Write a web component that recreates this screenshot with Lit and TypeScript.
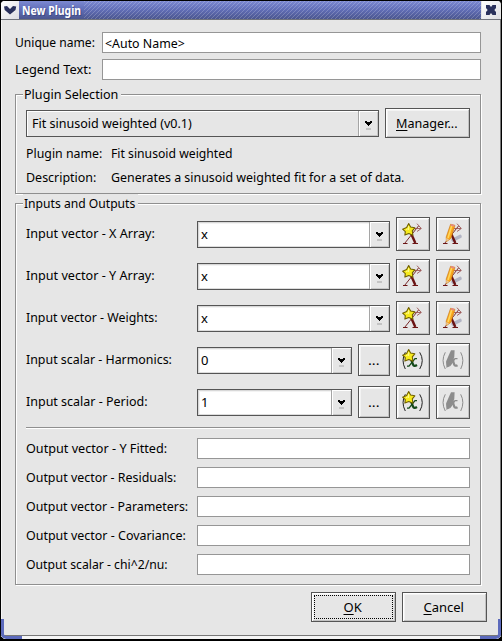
import { LitElement, html, svg, css, nothing } from "lit";
import { customElement, property } from "lit/decorators.js";

/** A line of text condensed horizontally to a given width. */
@customElement("ui-text")
class UiText extends LitElement {
  @property() text = "";
  @property({ type: Number }) w = 0;
  @property({ type: Number }) mnemonic = -1;
  static styles = css`
    :host { display: block; white-space: nowrap; flex: none; height: 18px; line-height: 18px; }
    span { display: inline-block; transform-origin: 0 50%; white-space: pre; }
    u { text-underline-offset: 2px; text-decoration-thickness: 1px; }
  `;
  updated() {
    const s = this.renderRoot.querySelector("span") as HTMLElement;
    this.style.width = this.w + "px";
    s.style.transform = `scaleX(${this.w / s.offsetWidth})`;
  }
  render() {
    const m = this.mnemonic;
    return html`<span>${m < 0 ? this.text : html`${this.text.slice(0, m)}<u>${this.text[m]}</u>${this.text.slice(m + 1)}`}</span>`;
  }
}

const star = svg`<path d="M12.7 6.6 L14.6 10 L18.8 10.8 L16.3 13.8 L16.9 18.2 L12.8 16.5 L8.9 18.1 L9.3 14.6 L6.6 12.2 L10.6 10.6 Z" fill="#f6ea1c" stroke="#716000" stroke-width="1.1" stroke-linejoin="round"/><path d="M12.6 9v4M10 12.5l3-1" stroke="#fffb8a" stroke-width="1"/>`;

const vectorX = svg`<g fill="none" stroke="#6b1414">
  <path d="M8.7 26.3L22.5 9" stroke-width=".9"/>
  <path d="M14 14L19.3 26" stroke-width="2.4"/>
  <path d="M7 26.5h4.5M16.5 26.5h5.5" stroke-width="1"/>
  <path d="M17 11.5H25M21 6.7L25.3 11.5L21 14.5" stroke="#9a5555" stroke-width=".9"/>
</g>`;

const icons: Record<string, unknown> = {
  newVector: svg`${vectorX}${star}`,
  editVector: svg`<path d="M17 23L24 19.5" stroke="#b2b4c4" stroke-width="3.6" stroke-linecap="round"/>${vectorX}
    <path d="M14.6 7.2L19 8.4L14.8 21.5L10.3 24.8L10.2 20Z" fill="#f9a51b" stroke="#c87510" stroke-width=".6"/>
    <path d="M15.8 8.5L12 21" stroke="#ffd75c" stroke-width="1.6"/><path d="M14.9 7.9L18.4 8.9" stroke="#e68a80" stroke-width="1.8"/>
    <path d="M10.3 21L10.3 24.6L13 22.4Z" fill="#e8c79a"/>`,
  newScalar: svg`<g fill="none" stroke="#222"><path d="M9.3 9.3Q4.8 17.5 9.3 26" stroke-width="1"/><path d="M23.7 9.3Q28.8 17.5 23.7 26" stroke-width="1"/></g>
    <g fill="none" stroke="#124818"><path d="M11 23.2L13 23.2L19 15.7L21 15.7" stroke-width="1.3"/><path d="M14.5 15L17 21.5Q18 24 21 22" stroke-width="2.2"/></g>${star}`,
  editScalar: svg`<g fill="none" stroke="#8c8c8c"><path d="M9.3 9.3Q4.8 17.5 9.3 26" stroke-width="1"/><path d="M24.7 9.3Q29 17.5 24.7 26" stroke-width="1"/>
    <path d="M12 23.3L14 22.5L19 15.7L21.5 15.7" stroke-width="1.3"/><path d="M16.5 15.5L18 21Q19 23.7 21.5 22.2" stroke-width="2.2"/></g>
    <path d="M15 7.2L18.6 7.2L18.3 14L15 21.5L10.5 25L10 18.5Z" fill="#8c8c8c"/>`,
};

@customElement("app-root")
class AppRoot extends LitElement {
  static styles = css`
    :host { display: block; width: 502px; height: 641px; font: 13px/18px "Noto Sans", "Open Sans", sans-serif; color: #000; background: #000; overflow: hidden; }
    * { box-sizing: border-box; }
    .window { position: relative; width: 502px; height: 641px; border: solid #000; border-width: 1px 1px 2px 1px; border-radius: 5px 5px 6px 6px; background: #e6e6e6; box-shadow: inset 1px 0 #f6f6f6, inset -1px 0 #777; display: flex; flex-direction: column; overflow: hidden; }
    .title { height: 19px; flex: none; display: flex; border-bottom: 1px solid #70737c; background: #e6e6e6; padding-right: 1px; }
    .tbtn { width: 18px; height: 18px; flex: none; background: linear-gradient(135deg, #fff, #dcdce2); }
    .tbtn.r { margin-left: 1px; }
    .tbtn svg, .face svg { display: block; }
    .bar { flex: 1; display: flex; padding-left: 3px; background: linear-gradient(#7c89d2, #626fb9 45%, #4b568f); color: #fff; font-weight: bold; font-size: 11.5px; text-shadow: 1px 1px #3f4a85; }
    .bar ui-text { margin-top: 1px; }
    .stripes { flex: 1; margin-left: 3px; background: repeating-linear-gradient(135deg, rgba(255,255,255,.2) 0 1px, transparent 1px 2.83px); }
    .body { flex: 1; display: flex; flex-direction: column; padding: 12px 0 0 14px; }
    .field { display: flex; width: 466px; height: 21px; margin-bottom: 6px; align-items: center; justify-content: space-between; }
    .field > ui-text, .outrow > ui-text, .lab > ui-text { margin-bottom: 2px; }
    .edit { height: 21px; background: #fff; border: 1px solid #969696; display: flex; align-items: center; padding-left: 2px; }
    .edit.top { width: 379px; }
    .edit.out { width: 273px; }
    .group { position: relative; width: 466px; border: 1px solid #8f8f8f; box-shadow: 1px 1px #fff, inset 1px 1px #fff; padding-left: 10px; padding-right: 9px; }
    .group.sel { height: 100px; margin-top: 8px; padding-top: 13px; }
    .group.io { height: 382px; margin-top: 9px; padding-top: 13px; }
    .legend { position: absolute; left: 7px; top: -10px; background: #e6e6e6; padding: 0 3px 0 1px; }
    .selrow { display: flex; justify-content: space-between; align-items: center; width: 444px; height: 30px; margin-bottom: 3px; }
    .info { display: flex; height: 24px; align-items: center; }
    .info .key { width: 85px; }
    .combo { height: 27px; border: 1px solid #555; background: #e6e6e6; display: flex; align-items: stretch; flex: none; }
    .combo .value { flex: 1; display: flex; align-items: center; padding-left: 5px; padding-bottom: 1px; box-shadow: inset 1px 1px #fff; }
    .combo.white .value { background: #fff; padding-left: 3px; padding-bottom: 0; box-shadow: inset 1px 1px #d8d8d8, inset 0 -1px #ddd, inset 2px 2px #f3f3f3; }
    .arrow { width: 20px; border-left: 1px solid #a5a5a5; box-shadow: inset 1px 1px #fff, inset -1px -1px #c6c6c6; }
    .arrow svg { display: block; }
    .w353 { width: 353px; } .w193 { width: 193px; } .w155 { width: 155px; }
    .btn { height: 30px; width: 85px; border: 1px solid #555; background: #e6e6e6; box-shadow: inset 1px 1px #fff, inset -1px -1px #c2c2c2, inset 2px 2px #f3f3f3; display: flex; align-items: center; justify-content: center; flex: none; }
    .btn > ui-text { margin-right: 2px; }
    .btn.dots { width: 32px; height: 32px; }
    .btn.face { width: 34px; height: 34px; }
    .btn.focus { outline: 1px dotted #000; outline-offset: -4px; }
    .row { display: flex; width: 444px; height: 34px; margin-bottom: 8px; align-items: center; gap: 6px; }
    .row .lab { flex: 1; }
    .rule { width: 444px; height: 2px; background: #8f8f8f; border-bottom: 1px solid #fff; margin-bottom: 9px; }
    .outrow { display: flex; width: 444px; height: 21px; margin-bottom: 8px; align-items: center; justify-content: space-between; }
    .footer { display: flex; gap: 6px; justify-content: flex-end; padding-right: 14px; margin-top: 7px; }
    .bottom { height: 4px; flex: none; border-top: 1px solid #777; background: #f5f5f5; }
    .corner { position: absolute; bottom: 0; width: 21px; height: 20px; border: 0 solid #5c6abc; border-bottom-width: 3px; }
    .corner.l { left: 0; border-left-width: 3px; border-bottom-left-radius: 5px; }
    .corner.r { right: 0; border-right-width: 3px; border-bottom-right-radius: 5px; }
  `;

  combo(text: string, w: number, cls: string) {
    return html`<div class="combo ${cls}">
      <div class="value"><ui-text text=${text} w=${w}></ui-text></div>
      <div class="arrow"><svg width="19" height="25" shape-rendering="crispEdges"><path d="M6 10h2v1h3v-1h2v2h-1v1h-1v1h-1v1h-1v-1h-1v-1h-1v-1h-1z"/><path d="M7 17h5v2h-5z" fill="#c4c4c4"/></svg></div>
    </div>`;
  }
  icon(name: string) {
    return html`<div class="btn face"><svg width="32" height="32" viewBox="1 1 32 32">${icons[name]}</svg></div>`;
  }
  row(label: string, w: number, value: string, scalar: boolean) {
    return html`<div class="row">
      <div class="lab"><ui-text text=${label} w=${w}></ui-text></div>
      ${this.combo(value, 7, scalar ? "white w155" : "white w193")}
      ${scalar ? html`<div class="btn dots"><ui-text text="..." w="11"></ui-text></div>` : nothing}
      ${this.icon(scalar ? "newScalar" : "newVector")}${this.icon(scalar ? "editScalar" : "editVector")}
    </div>`;
  }
  out(label: string, w: number) {
    return html`<div class="outrow"><ui-text text=${label} w=${w}></ui-text><div class="edit out"></div></div>`;
  }

  render() {
    return html`<div class="window">
      <div class="title">
        <div class="tbtn"><svg width="18" height="18"><path d="M3 5.5L6 5L9 8L12 5L15.2 5.5L14.5 9L9 13.5L3.7 9Z" fill="#29305c"/></svg></div>
        <div class="bar"><ui-text text="New Plugin" w="59"></ui-text><div class="stripes"></div></div>
        <div class="tbtn r"><svg width="18" height="18"><path d="M4 4h3.5L9 6l1.5-2H14v3l-1.7 2L14 11v3h-3.5L9 12l-1.5 2H4v-3l1.7-2L4 7z" fill="#29305c"/></svg></div>
      </div>
      <div class="body">
        <div class="field"><ui-text text="Unique name:" w="80"></ui-text><div class="edit top"><ui-text text="<Auto Name>" w="80"></ui-text></div></div>
        <div class="field"><ui-text text="Legend Text:" w="76"></ui-text><div class="edit top"></div></div>
        <div class="group sel">
          <div class="legend"><ui-text text="Plugin Selection" w="94"></ui-text></div>
          <div class="selrow">${this.combo("Fit sinusoid weighted (v0.1)", 160, "w353")}
            <div class="btn"><ui-text text="Manager..." w="62" mnemonic="0"></ui-text></div></div>
          <div class="info"><div class="key"><ui-text text="Plugin name:" w="76"></ui-text></div><ui-text text="Fit sinusoid weighted" w="122"></ui-text></div>
          <div class="info"><div class="key"><ui-text text="Description:" w="70"></ui-text></div><ui-text text="Generates a sinusoid weighted fit for a set of data." w="293"></ui-text></div>
        </div>
        <div class="group io">
          <div class="legend"><ui-text text="Inputs and Outputs" w="111"></ui-text></div>
          ${this.row("Input vector - X Array:", 129, "x", false)}
          ${this.row("Input vector - Y Array:", 129, "x", false)}
          ${this.row("Input vector - Weights:", 132, "x", false)}
          ${this.row("Input scalar - Harmonics:", 146, "0", true)}
          ${this.row("Input scalar - Period:", 122, "1", true)}
          <div class="rule"></div>
          ${this.out("Output vector - Y Fitted:", 141)}
          ${this.out("Output vector - Residuals:", 150)}
          ${this.out("Output vector - Parameters:", 162)}
          ${this.out("Output vector - Covariance:", 160)}
          ${this.out("Output scalar - chi^2/nu:", 142)}
        </div>
        <div class="footer"><div class="btn focus"><ui-text text="OK" w="18" mnemonic="0"></ui-text></div><div class="btn"><ui-text text="Cancel" w="40" mnemonic="0"></ui-text></div></div>
      </div>
      <div class="bottom"></div>
      <div class="corner l"></div><div class="corner r"></div>
    </div>`;
  }
}
